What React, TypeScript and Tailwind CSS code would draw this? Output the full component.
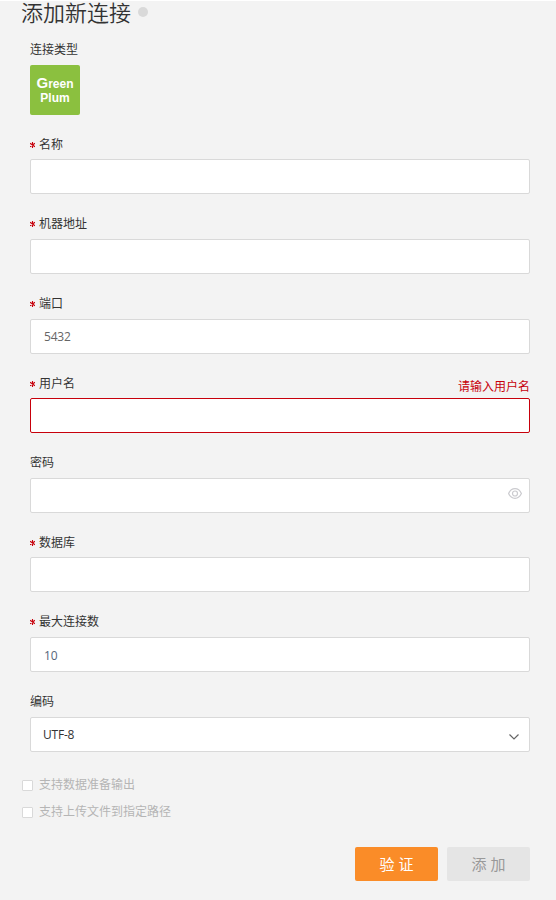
import React, { useState } from 'react';
import clsx from 'clsx';

interface FieldProps {
  label: string;
  required?: boolean;
  error?: string;
  value?: string;
  valueClass?: string;
  children?: React.ReactNode;
}

function Asterisk() {
  return (
    <svg className="w-[5px] h-[6px] mr-1 shrink-0" viewBox="0 0 5 6" fill="none" stroke="#c7000b" strokeWidth="1.1">
      <path d="M2.5 0v6M0 1.3l5 3.4M5 1.3L0 4.7" />
    </svg>
  );
}

function EyeIcon() {
  return (
    <svg className="w-[14px] h-[11px]" viewBox="0 0 14 11" fill="none" stroke="#cbcbcf" strokeWidth="1.2">
      <path d="M0.6 5.5C2 2.4 4.2 0.7 7 0.7s5 1.7 6.4 4.8C12 8.6 9.8 10.3 7 10.3S2 8.6 0.6 5.5z" />
      <circle cx="7" cy="5.5" r="2.5" />
    </svg>
  );
}

function Field({ label, required, error, value = '', valueClass = 'text-[#666]', children }: FieldProps) {
  return (
    <div className="h-[79.6px]">
      <div className="flex items-center h-4 mb-[6.6px] text-[#333]">
        {required && <Asterisk />}
        <span>{label}</span>
        {error && <span className="ml-auto mt-[7px] text-[#c7000b]">{error}</span>}
      </div>
      <div
        className={clsx(
          'flex items-center justify-between h-[35px] bg-white border rounded-[2px]',
          error ? 'border-[#c7000b]' : 'border-[#d9d9d9]'
        )}
      >
        <span className={clsx('tracking-[-0.2px]', valueClass)}>{value}</span>
        {children}
      </div>
    </div>
  );
}

function Check({ label }: { label: string }) {
  return (
    <div className="flex items-center h-[27px] text-[#b5b5b5]">
      <span className="w-[11px] h-[11px] mr-[6px] bg-white border border-[#d9d9d9] rounded-[1px]" />
      <span>{label}</span>
    </div>
  );
}

export default function App() {
  const [port] = useState('5432');
  const [maxConnections] = useState('10');

  return (
    <div className="w-[556px] h-[900px] bg-[#f3f3f3] border-t border-white text-xs leading-4 font-['Open_Sans','Noto_Sans_CJK_SC',sans-serif]">
      <div className="flex items-start h-6 pl-[21px]">
        <h1 className="-mt-[1px] text-[22px] leading-6 font-[350] text-[#333]">添加新连接</h1>
        <span className="w-[10px] h-[10px] ml-[7px] mt-[6px] rounded-full bg-[#d9d9d9]" />
      </div>

      <div className="w-[500px] ml-[30px]">
        <div className="h-[111.8px] pt-[17px]">
          <div className="text-[#333]">连接类型</div>
          <div className="flex flex-col items-center justify-center w-[50px] h-[50px] mt-[7px] rounded-[2px] bg-[#8bc03f] text-white font-bold leading-[14px] font-['Liberation_Sans',sans-serif]">
            <div><span className="text-[15px]">G</span>reen</div>
            <div>Plum</div>
          </div>
        </div>

        <Field label="名称" required />
        <Field label="机器地址" required />
        <Field label="端口" required value={port} valueClass="pl-[13px] pt-[2px] text-[#666]" />
        <Field label="用户名" required error="请输入用户名" />
        <Field label="密码">
          <span className="mr-[7px] mb-[3px]"><EyeIcon /></span>
        </Field>
        <Field label="数据库" required />
        <Field label="最大连接数" required value={maxConnections} valueClass="pl-[13px] pt-[3px] text-[#55657a]" />
        <Field label="编码" value="UTF-8" valueClass="pl-3 pt-[2px] text-[#333]">
          <svg className="w-[10px] h-[6px] mr-[10px] mt-[5px]" viewBox="0 0 10 6" fill="none" stroke="#666" strokeWidth="1.2">
            <path d="M0.5 0.5L5 5L9.5 0.5" />
          </svg>
        </Field>
      </div>

      <div className="ml-[22px] -mt-[2px]">
        <Check label="支持数据准备输出" />
        <Check label="支持上传文件到指定路径" />
      </div>

      <div className="flex justify-end gap-[9px] mt-[21px] pr-[26px] text-[15px]">
        <button className="w-[83px] h-[34px] rounded-[2px] bg-[#fa8c28] text-white">验 证</button>
        <button className="w-[83px] h-[34px] rounded-[2px] bg-[#e5e5e5] text-[#999]">添 加</button>
      </div>
    </div>
  );
}
